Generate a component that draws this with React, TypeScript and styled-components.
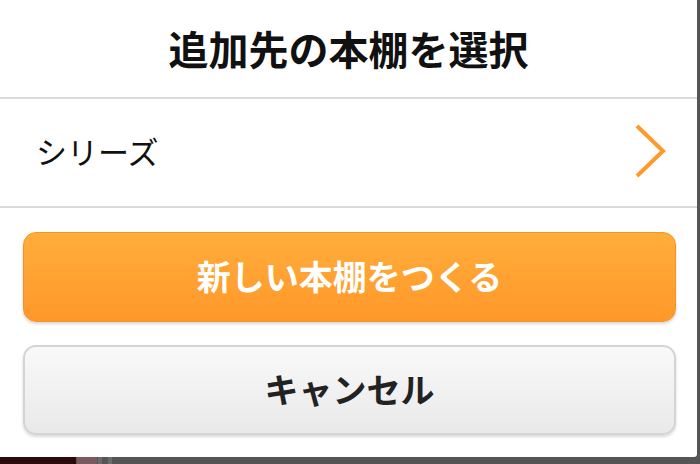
import React from 'react';
import styled, { createGlobalStyle } from 'styled-components';

const GlobalStyle = createGlobalStyle`
  html, body {
    margin: 0;
    padding: 0;
    background: #555555;
  }
  body {
    font-family: "Noto Sans CJK JP", "Noto Sans", sans-serif;
  }
`;

export default function App() {
  return (
    <Page>
      <GlobalStyle />
      <Dialog>
        <Title>追加先の本棚を選択</Title>
        <Divider />
        <ShelfRow>
          <ShelfName>シリーズ</ShelfName>
          <Chevron width="34" height="58" viewBox="0 0 34 58">
            <polyline points="4,3 30,28 4,53" fill="none" stroke="#ff9a2a" strokeWidth="4" />
          </Chevron>
        </ShelfRow>
        <Divider />
        <Buttons>
          <Button variant="primary">新しい本棚をつくる</Button>
          <Button variant="secondary">キャンセル</Button>
        </Buttons>
      </Dialog>
      <Backdrop>
        <Thumb color="#2a0a0c" width={76} />
        <Thumb color="#7a5a5e" width={20} />
        <Thumb color="#6a6a6a" width={4} />
        <Thumb color="#555555" width={4} />
        <Thumb color="#6a6a6a" width={4} />
      </Backdrop>
    </Page>
  );
}

const Page = styled.div`
  width: 700px;
  height: 464px;
  overflow: hidden;
  background: #555555;
  display: flex;
  flex-direction: column;
`;

const Dialog = styled.div`
  width: 697px;
  height: 457px;
  background: #ffffff;
  border-radius: 0 0 3px 0;
  display: flex;
  flex-direction: column;
  flex-shrink: 0;
`;

const Title = styled.div`
  height: 97px;
  display: flex;
  align-items: center;
  justify-content: center;
  font-size: 40px;
  font-weight: 700;
  color: #111111;
  padding-bottom: 2px;
  box-sizing: border-box;
`;

const Divider = styled.div`
  height: 2px;
  background: #dadada;
`;

const ShelfRow = styled.div`
  height: 107px;
  display: flex;
  align-items: center;
  justify-content: space-between;
  padding: 0 30px 0 36px;
`;

const ShelfName = styled.span`
  font-size: 31px;
  color: #111111;
  padding-bottom: 4px;
`;

const Chevron = styled.svg`
  display: block;
  margin-bottom: 2px;
`;

const Buttons = styled.div`
  display: flex;
  flex-direction: column;
  gap: 23px;
  padding: 24px 21px 0 23px;
`;

interface ButtonProps {
  variant: 'primary' | 'secondary';
}

const Button = styled.div<ButtonProps>`
  height: 90px;
  box-sizing: border-box;
  border-radius: 13px;
  display: flex;
  align-items: center;
  justify-content: center;
  font-size: 34px;
  font-weight: 700;
  padding-bottom: 4px;
  color: ${p => (p.variant === 'primary' ? '#ffffff' : '#222222')};
  background: ${p =>
    p.variant === 'primary'
      ? 'linear-gradient(#ffad3b, #ff982a)'
      : 'linear-gradient(#f9f9f9, #e9e9e9)'};
  border: ${p => (p.variant === 'primary' ? '1px solid #f7931f' : '2px solid #d4d4d4')};
  box-shadow: 0 2px 3px rgba(0, 0, 0, 0.15);
`;

const Backdrop = styled.div`
  flex: 1;
  display: flex;
  align-items: stretch;
  gap: 1px;
`;

interface ThumbProps {
  color: string;
  width: number;
}

const Thumb = styled.div<ThumbProps>`
  width: ${p => p.width}px;
  background: ${p => p.color};
`;
